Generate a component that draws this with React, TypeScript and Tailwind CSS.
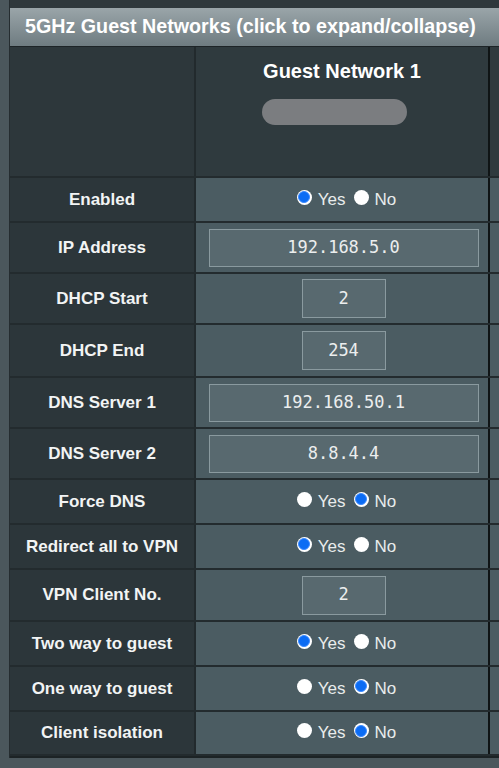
import React from "react"

type Row =
  | { label: string; kind: "radio"; yes: boolean; h: string }
  | { label: string; kind: "wide" | "small"; value: string; h: string }

const rows: Row[] = [
  { label: "Enabled", kind: "radio", yes: true, h: "h-[45px]" },
  { label: "IP Address", kind: "wide", value: "192.168.5.0", h: "h-[51px]" },
  { label: "DHCP Start", kind: "small", value: "2", h: "h-[51px]" },
  { label: "DHCP End", kind: "small", value: "254", h: "h-[53px]" },
  { label: "DNS Server 1", kind: "wide", value: "192.168.50.1", h: "h-[51px]" },
  { label: "DNS Server 2", kind: "wide", value: "8.8.4.4", h: "h-[51px]" },
  { label: "Force DNS", kind: "radio", yes: false, h: "h-[45px]" },
  { label: "Redirect all to VPN", kind: "radio", yes: true, h: "h-[45px]" },
  { label: "VPN Client No.", kind: "small", value: "2", h: "h-[52px]" },
  { label: "Two way to guest", kind: "radio", yes: true, h: "h-[45px]" },
  { label: "One way to guest", kind: "radio", yes: false, h: "h-[45px]" },
  { label: "Client isolation", kind: "radio", yes: false, h: "h-[44px]" },
]

function Radio({ checked }: { checked: boolean }) {
  return (
    <span className="mr-[6px] mb-[5px] w-[15px] h-[15px] rounded-full bg-white flex items-center justify-center shrink-0">
      {checked && <span className="w-[12px] h-[12px] rounded-full bg-[#0b6cf4] border-[1.5px] border-[#3d8bff]" />}
    </span>
  )
}

function YesNo({ yes }: { yes: boolean }) {
  return (
    <div className="flex items-center text-[17px] text-[#e9ecec] pl-[6px]">
      <Radio checked={yes} />
      <span className="mr-[8px]">Yes</span>
      <Radio checked={!yes} />
      <span>No</span>
    </div>
  )
}

function Field({ value, wide }: { value: string; wide: boolean }) {
  return (
    <div
      className={`${wide ? "w-[270px] h-[38px]" : "w-[84px] h-[39px]"} bg-[#58696f] border border-[#8a9a9f] flex items-center justify-center text-[17px] text-[#eceeee] font-['DejaVu_Sans_Mono',monospace]`}
    >
      {value}
    </div>
  )
}

export default function App() {
  return (
    <div className="w-[499px] h-[768px] overflow-hidden bg-[#4b575c] font-['Liberation_Sans',Arial,sans-serif]">
      <div className="ml-[9px] w-[640px] bg-[#1f2729] border-l border-[#252d30]">
        <div className="h-[8px] bg-[#2f383c]" />
        <div className="h-[38px] bg-gradient-to-b from-[#9aa5a9] to-[#6f7c81] flex items-center pl-[15px] text-[19.7px] font-bold text-white whitespace-nowrap">
          5GHz Guest Networks (click to expand/collapse)
        </div>
        <div className="h-[1px] bg-[#1d2427]" />

        <div className="flex h-[131px] border-b-2 border-[#232b2e]">
          <div className="w-[186px] bg-[#2d373b] border-r-2 border-[#222a2d]" />
          <div className="w-[292px] bg-[#2f3a3e] flex flex-col items-center pt-[9px]">
            <div className="text-[20px] font-bold text-white">Guest Network 1</div>
            <div className="mt-[13px] mr-[16px] w-[145px] h-[26px] rounded-full bg-[#7b7d80]" />
          </div>
          <div className="flex-1 bg-[#2f3a3e] border-l-2 border-[#0f1415]" />
        </div>

        {rows.map((r) => (
          <div key={r.label} className={`flex ${r.h} border-b-2 border-[#232b2e]`}>
            <div className="w-[186px] bg-[#2c363a] border-r-2 border-[#222a2d] flex items-center justify-center text-[17px] font-bold text-[#f2f4f4] whitespace-nowrap">
              {r.label}
            </div>
            <div className="w-[292px] bg-[#4b5c62] flex items-center justify-center pl-[3px]">
              {r.kind === "radio" ? <YesNo yes={r.yes} /> : <Field value={r.value} wide={r.kind === "wide"} />}
            </div>
            <div className="flex-1 bg-[#4b5c62] border-l-2 border-[#0f1415]" />
          </div>
        ))}
        <div className="h-[2px] bg-[#1c2325]" />
      </div>
    </div>
  )
}
